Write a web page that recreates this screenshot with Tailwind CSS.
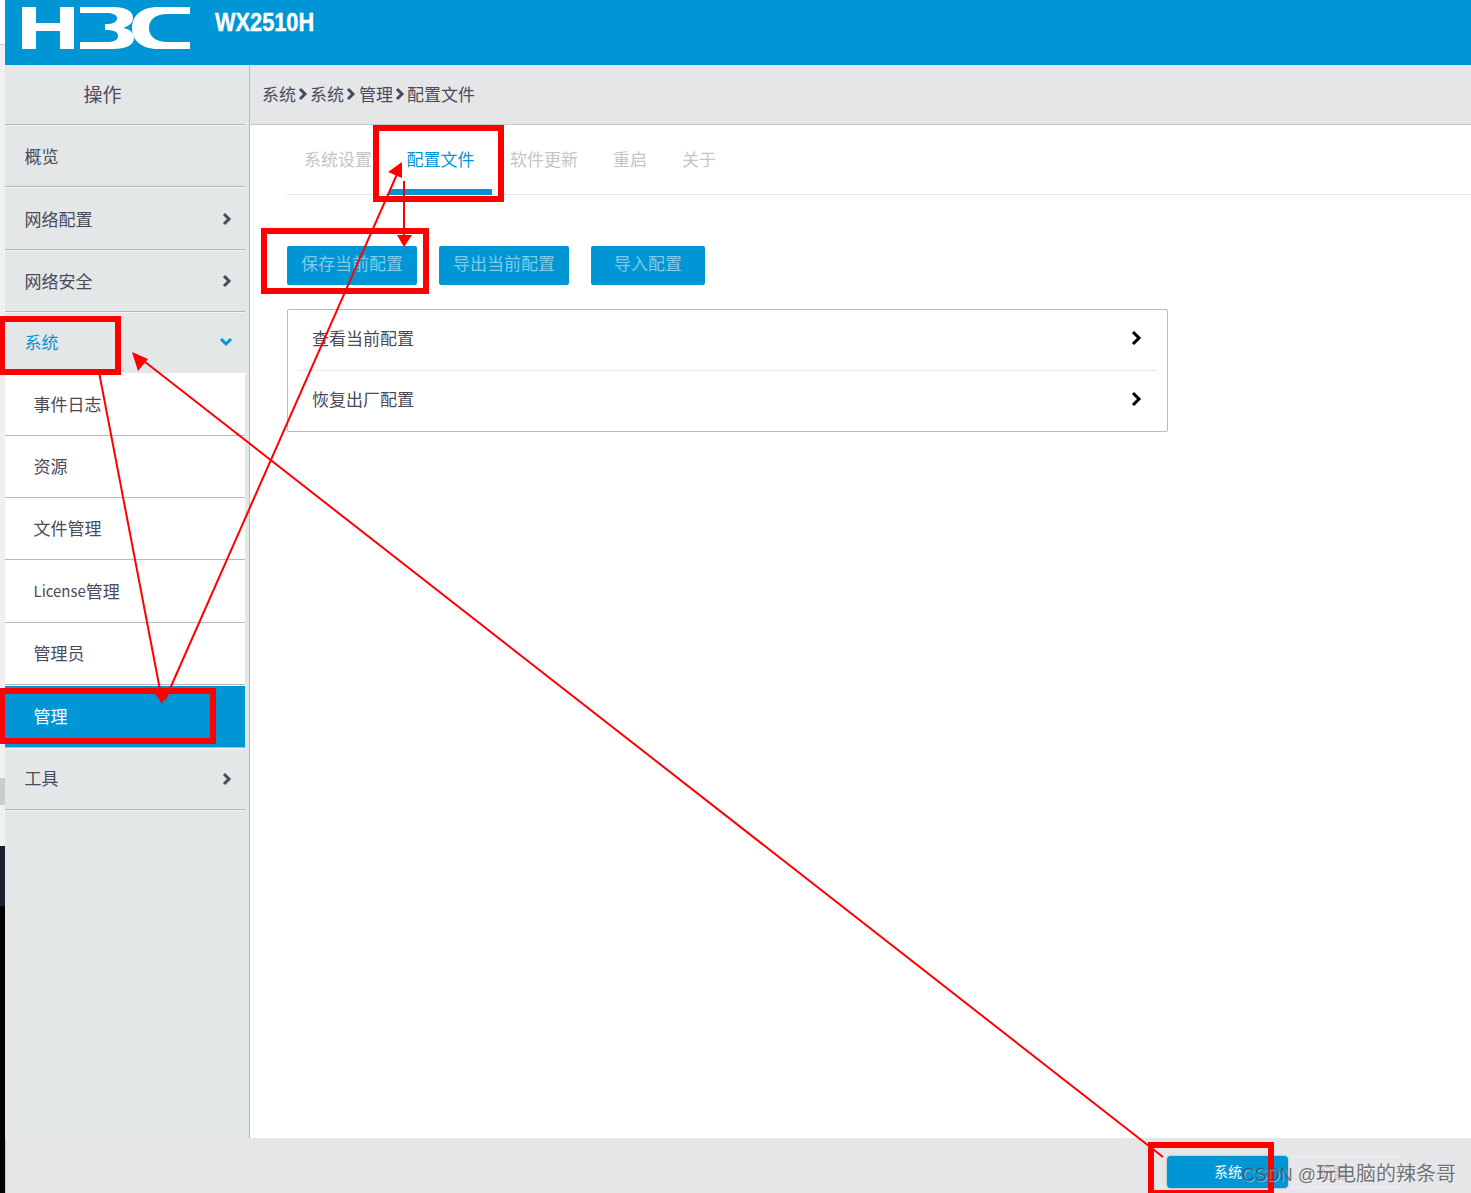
<!DOCTYPE html>
<html lang="zh">
<head>
<meta charset="utf-8">
<script src="https://cdn.jsdelivr.net/npm/@tailwindcss/browser@4"></script>
</head>
<body class="bg-white">
<div class="relative flex h-[1193px] w-[1471px] overflow-hidden font-['Noto_Sans_CJK_SC','Noto_Sans',sans-serif] text-[17px] text-[#4a4a5a]">
  <!-- left strip -->
  <div class="flex w-[5px] shrink-0 flex-col bg-[#f0f0f0]">
    <div class="h-[44px] bg-white"></div>
    <div class="h-px bg-[#c8c8c8]"></div>
    <div class="h-[733px]"></div>
    <div class="h-[27px] bg-[#cccccc]"></div>
    <div class="h-[41px]"></div>
    <div class="h-[60px] bg-[#1a2130]"></div>
    <div class="flex-1 bg-black"></div>
  </div>
  <div class="flex min-w-0 flex-1 flex-col">
    <!-- header -->
    <header class="flex h-[65px] shrink-0 items-start bg-[#0096d6]">
      <svg class="ml-[16px] mt-[7px]" width="170" height="42" viewBox="21 7 170 42" fill="#fff">
        <path d="M22 7H36V23H60V7H74V49H60V31H36V49H22z"/>
        <path d="M80 7H113C126 7 133 11 133 18C133 23 129 26 123 28C130 29 134 33 134 38C134 45 126 49 113 49H80V42H106C114 42 118 40 118 36C118 32 114 30 106 30H105V24H106C113 24 117 22 117 18C117 15 113 13 106 13H80z"/>
        <path d="M190 7V14H168C155 14 149 20 149 28C149 36 155 42 168 42H190V49H158C141 49 132 40 132 28C132 16 141 7 158 7z"/>
      </svg>
      <div class="ml-[24px] mt-[7px] origin-left font-['Liberation_Sans',sans-serif] text-[25px] font-bold leading-[30px] text-white [-webkit-text-stroke:0.4px_white] [transform:scaleX(0.87)]">WX2510H</div>
    </header>
    <div class="flex min-h-0 flex-1">
      <!-- sidebar -->
      <aside class="flex w-[245px] shrink-0 flex-col border-r border-[#b9b9b9] bg-[#e4e7e8]">
        <div class="flex h-[59px] w-[240px] items-center justify-center pr-[45px] text-[19px]">操作</div>
        <div class="h-[2px] w-[240px] border-t border-[#b4b4b4] bg-white/60"></div>
        <a class="flex h-[60px] w-[240px] items-center pb-[1px] pl-[19.5px]">概览</a>
        <div class="h-[2px] w-[240px] border-t border-[#b4b4b4] bg-white/60"></div>
        <a class="flex h-[61px] w-[240px] items-center justify-between pl-[19.5px] pr-[12px]">网络配置
          <svg width="12" height="14" viewBox="0 0 12 14" fill="none" stroke="#4a4a5a" stroke-width="3"><path d="M3 2l5 5-5 5"/></svg></a>
        <div class="h-[2px] w-[240px] border-t border-[#b4b4b4] bg-white/60"></div>
        <a class="flex h-[60px] w-[240px] items-center justify-between pl-[19.5px] pr-[12px]">网络安全
          <svg width="12" height="14" viewBox="0 0 12 14" fill="none" stroke="#4a4a5a" stroke-width="3"><path d="M3 2l5 5-5 5"/></svg></a>
        <div class="h-[2px] w-[240px] border-t border-[#b4b4b4] bg-white/60"></div>
        <a class="flex h-[60px] w-[240px] items-center justify-between pb-[2px] pl-[19.5px] pr-[12px] text-[#0096d6]">系统
          <svg width="14" height="12" viewBox="0 0 14 12" fill="none" stroke="#0096d6" stroke-width="3"><path d="M2 3l5 5 5-5"/></svg></a>
        <div class="flex w-[240px] flex-col bg-white">
          <a class="flex h-[63px] items-center border-b border-[#b9b9b9] pl-[28.5px]">事件日志</a>
          <a class="flex h-[62px] items-center border-b border-[#b9b9b9] pb-[2px] pl-[28.5px]">资源</a>
          <a class="flex h-[62px] items-center border-b border-[#b9b9b9] pb-[2px] pl-[28.5px]">文件管理</a>
          <a class="flex h-[63px] items-center border-b border-[#b9b9b9] pl-[28.5px]"><span class="text-[15px]">License</span>管理</a>
          <a class="flex h-[62px] items-center border-b border-[#b9b9b9] pb-[2px] pl-[28.5px]">管理员</a>
          <a class="mt-px flex h-[61px] items-center bg-[#0096d6] pb-[2px] pl-[28.5px] text-white">管理</a>
        </div>
        <div class="h-[2px] w-[240px] border-t border-[#b4b4b4] bg-white/60"></div>
        <a class="flex h-[60px] w-[240px] items-center justify-between pl-[19.5px] pr-[12px]"><span class="pb-[2px]">工具</span>
          <svg width="12" height="14" viewBox="0 0 12 14" fill="none" stroke="#4a4a5a" stroke-width="3"><path d="M3 2l5 5-5 5"/></svg></a>
        <div class="h-[2px] w-[240px] border-t border-[#b4b4b4] bg-white/60"></div>
      </aside>
      <main class="flex min-w-0 flex-1 flex-col">
        <div class="flex h-[60px] items-center gap-px border-b border-[#c8c8c8] bg-[#e5e6e8] pb-[2px] pl-[12px]">
          <span>系统</span><svg width="12" height="14" viewBox="0 0 12 14" fill="none" stroke="#4a4a5a" stroke-width="3"><path d="M3 2l5 5-5 5"/></svg>
          <span>系统</span><svg class="mr-px" width="12" height="14" viewBox="0 0 12 14" fill="none" stroke="#4a4a5a" stroke-width="3"><path d="M3 2l5 5-5 5"/></svg>
          <span>管理</span><svg width="12" height="14" viewBox="0 0 12 14" fill="none" stroke="#4a4a5a" stroke-width="3"><path d="M3 2l5 5-5 5"/></svg>
          <span>配置文件</span>
        </div>
        <div class="ml-[36px] flex h-[70px] border-b border-[#e5e5e5] text-[#c4c4c4]">
          <a class="flex h-[70px] items-center pb-[2px] pl-[18px] pr-[17px]">系统设置</a>
          <a class="flex h-[70px] w-[103px] items-center justify-center border-b-[6px] border-[#0096d6] pt-[4px] text-[#0096d6]">配置文件</a>
          <a class="flex h-[70px] items-center pb-[2px] pl-[18px] pr-[17px]">软件更新</a>
          <a class="flex h-[70px] items-center pb-[2px] pl-[18px] pr-[17px]">重启</a>
          <a class="flex h-[70px] items-center pb-[2px] pl-[18px] pr-[17px]">关于</a>
        </div>
        <div class="ml-[37px] mt-[51px] flex gap-[22px] text-[#7fcbe9]">
          <button class="h-[39px] w-[130px] rounded-[2px] bg-[#0096d6] pb-[5px]">保存当前配置</button>
          <button class="h-[39px] w-[130px] rounded-[2px] bg-[#0096d6] pb-[5px]">导出当前配置</button>
          <button class="h-[39px] w-[114px] rounded-[2px] bg-[#0096d6] pb-[5px]">导入配置</button>
        </div>
        <div class="ml-[37px] mt-[24px] w-[881px] rounded-[2px] border border-[#b9b9b9] px-[10px]">
          <div class="flex h-[61px] items-center justify-between border-b border-[#e8e8e8] pb-[5px] pl-[14px] pr-[13px]">查看当前配置
            <svg width="14" height="16" viewBox="0 0 14 16" fill="none" stroke="#000" stroke-width="3"><path d="M3 2l6 6-6 6"/></svg></div>
          <div class="flex h-[60px] items-center justify-between pb-[5px] pl-[14px] pr-[13px]">恢复出厂配置
            <svg width="14" height="16" viewBox="0 0 14 16" fill="none" stroke="#000" stroke-width="3"><path d="M3 2l6 6-6 6"/></svg></div>
        </div>
      </main>
    </div>
    <!-- footer -->
    <footer class="flex h-[55px] shrink-0 items-start justify-end border-l border-[#c8c8c8] bg-[#e5e6e8] pr-[66px] pt-[18px]">
      <div class="flex h-[32px] w-[239px] items-center rounded-[4px] border border-[#ebedef] bg-[#e6e7ea]">
        <div class="flex h-[32px] w-[121px] shrink-0 items-center justify-end rounded-[4px] bg-[#0096d6] pb-[2px] pr-[46px] text-[14px] text-white shadow-[0_0_2px_#888]">系统</div>
        <div class="ml-[30px] text-[14px] text-[#c2c4c8]">配置</div>
      </div>
    </footer>
  </div>
  <!-- red annotations -->
  <svg class="absolute left-0 top-0" width="1471" height="1193" viewBox="0 0 1471 1193" fill="none" stroke="#ff0000">
    <g stroke-width="6">
      <rect x="376" y="128" width="125" height="71"/>
      <rect x="264" y="231" width="162" height="60"/>
      <rect x="2" y="319" width="116" height="53"/>
      <rect x="2" y="691" width="211" height="50"/>
      <rect x="1151" y="1145" width="120" height="48"/>
    </g>
    <g stroke-width="2">
      <path d="M99 372L161 695"/>
      <path d="M165 700L398 172"/>
      <path d="M404 181V238"/>
      <path d="M1163 1157L140 358"/>
    </g>
    <g fill="#ff0000" stroke="none">
      <path d="M162 704L153 690L169 689z"/>
      <path d="M402 162L402 178L388 172z"/>
      <path d="M404 247L397 235L412 235z"/>
      <path d="M132 352L148 359L138 371z"/>
    </g>
  </svg>
  <!-- watermark -->
  <div class="absolute right-[15px] top-[1159px] whitespace-nowrap font-['Noto_Sans_CJK_SC',sans-serif] text-[20px] leading-[28px] text-[#3c3c3c]/70 [text-shadow:1px_1px_1px_rgba(255,255,255,0.45)]"><span class="font-['Liberation_Sans',sans-serif] text-[18px]">CSDN @</span>玩电脑的辣条哥</div>
</div>
</body>
</html>
